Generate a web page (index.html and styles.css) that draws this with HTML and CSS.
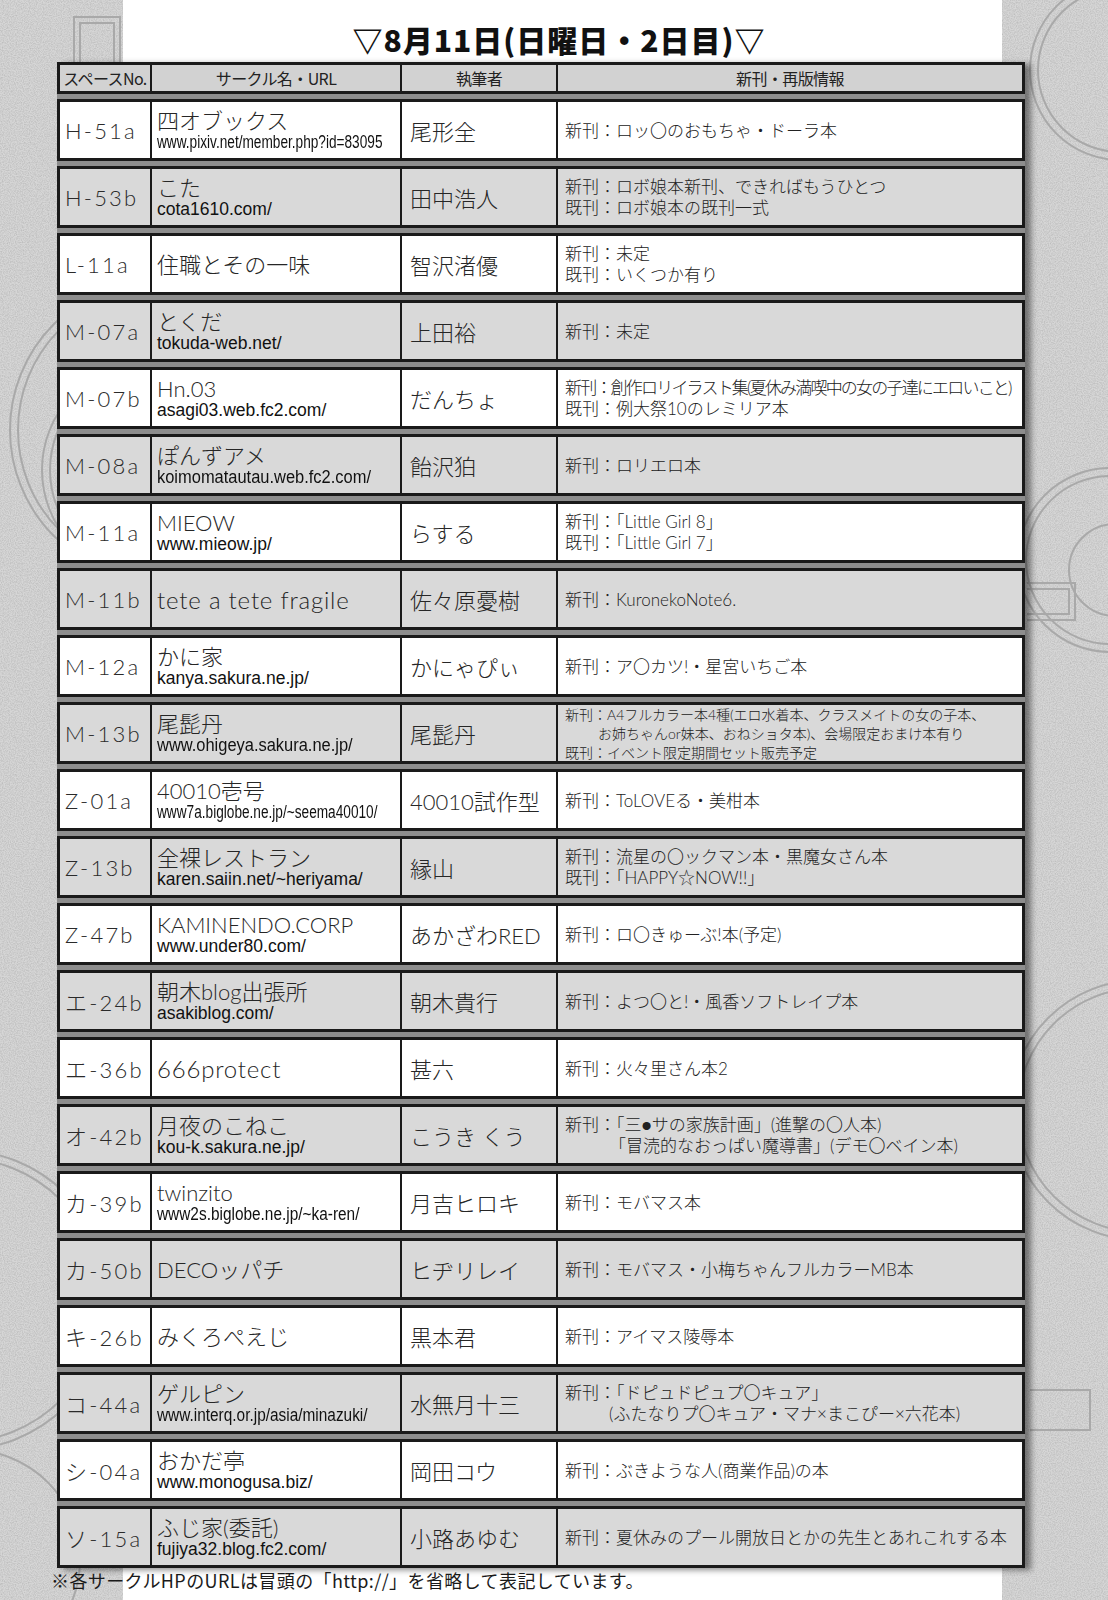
FILE: index.html
```html
<!DOCTYPE html>
<html lang="ja">
<head>
<meta charset="utf-8">
<title>8月11日(日曜日・2日目)</title>
<link rel="stylesheet" href="styles.css">
</head>
<body>
<svg class="bg" width="1108" height="1600" viewBox="0 0 1108 1600" aria-hidden="true">
  <defs>
    <filter id="grain" x="0" y="0" width="100%" height="100%">
      <feTurbulence type="fractalNoise" baseFrequency="0.85" numOctaves="2" seed="3"/>
      <feColorMatrix type="matrix" values="0 0 0 0 0.35  0 0 0 0 0.35  0 0 0 0 0.35  0 0 0 -1.6 1.05"/>
    </filter>
  </defs>
  <rect x="0" y="0" width="1108" height="1600" fill="#d6d6d6"/>
  <rect x="0" y="0" width="1108" height="1600" filter="url(#grain)" opacity="0.55"/>
  <g fill="none" stroke="#a9a9a9" stroke-width="2">
    <rect x="74" y="17" width="46" height="60"/>
    <rect x="80" y="23" width="34" height="54"/>
    <circle cx="160" cy="430" r="150"/>
    <circle cx="160" cy="430" r="142"/>
    <circle cx="150" cy="470" r="108"/>
    <circle cx="150" cy="470" r="100"/>
    <circle cx="1110" cy="560" r="92"/>
    <circle cx="1110" cy="560" r="84"/>
    <circle cx="1115" cy="570" r="46"/>
    <path d="M1027 583 H1075 V620 H1027"/>
    <path d="M1027 589 H1069 V614 H1027"/>
    <circle cx="1140" cy="1110" r="130"/>
    <circle cx="1140" cy="1110" r="122"/>
    <circle cx="-40" cy="1300" r="150"/>
    <circle cx="-40" cy="1300" r="142"/>
    <circle cx="1120" cy="70" r="90"/>
    <circle cx="1120" cy="70" r="82"/>
    <circle cx="-30" cy="1560" r="110"/>
    <path d="M1030 1390 H1090 V1430 H1030"/>
  </g>
  <rect x="123" y="0" width="879" height="1600" fill="#ffffff"/>
</svg>

<div class="page">
  <h1 class="title">▽8月11日(日曜日・2日目)▽</h1>

  <div class="table">
    <div class="row head">
      <div class="c hc">スペースNo.</div>
      <div class="c hc">サークル名・URL</div>
      <div class="c hc">執筆者</div>
      <div class="c hc">新刊・再版情報</div>
    </div>

    <div class="row">
      <div class="c sp">H-51a</div>
      <div class="c nm"><div class="name">四オブックス</div><div class="url n78">www.pixiv.net/member.php?id=83095</div></div>
      <div class="c au">尾形全</div>
      <div class="c info"><p>新刊：ロッ〇のおもちゃ・ドーラ本</p></div>
    </div>

    <div class="row g">
      <div class="c sp">H-53b</div>
      <div class="c nm"><div class="name">こた</div><div class="url">cota1610.com/</div></div>
      <div class="c au">田中浩人</div>
      <div class="c info"><p>新刊：ロボ娘本新刊、できればもうひとつ</p><p>既刊：ロボ娘本の既刊一式</p></div>
    </div>

    <div class="row">
      <div class="c sp">L-11a</div>
      <div class="c nm"><div class="name">住職とその一味</div></div>
      <div class="c au">智沢渚優</div>
      <div class="c info"><p>新刊：未定</p><p>既刊：いくつか有り</p></div>
    </div>

    <div class="row g">
      <div class="c sp">M-07a</div>
      <div class="c nm"><div class="name">とくだ</div><div class="url">tokuda-web.net/</div></div>
      <div class="c au">上田裕</div>
      <div class="c info"><p>新刊：未定</p></div>
    </div>

    <div class="row">
      <div class="c sp">M-07b</div>
      <div class="c nm"><div class="name">Hn.03</div><div class="url">asagi03.web.fc2.com/</div></div>
      <div class="c au">だんちょ</div>
      <div class="c info"><p class="tight">新刊：創作ロリイラスト集(夏休み満喫中の女の子達にエロいこと)</p><p>既刊：例大祭10のレミリア本</p></div>
    </div>

    <div class="row g">
      <div class="c sp">M-08a</div>
      <div class="c nm"><div class="name">ぽんずアメ</div><div class="url n94">koimomatautau.web.fc2.com/</div></div>
      <div class="c au">飴沢狛</div>
      <div class="c info"><p>新刊：ロリエロ本</p></div>
    </div>

    <div class="row">
      <div class="c sp">M-11a</div>
      <div class="c nm"><div class="name">MIEOW</div><div class="url">www.mieow.jp/</div></div>
      <div class="c au">らする</div>
      <div class="c info"><p>新刊：「Little Girl 8」</p><p>既刊：「Little Girl 7」</p></div>
    </div>

    <div class="row g">
      <div class="c sp">M-11b</div>
      <div class="c nm"><div class="name latin">tete a tete fragile</div></div>
      <div class="c au">佐々原憂樹</div>
      <div class="c info"><p>新刊：KuronekoNote6.</p></div>
    </div>

    <div class="row">
      <div class="c sp">M-12a</div>
      <div class="c nm"><div class="name">かに家</div><div class="url">kanya.sakura.ne.jp/</div></div>
      <div class="c au">かにゃぴぃ</div>
      <div class="c info"><p>新刊：ア〇カツ!・星宮いちご本</p></div>
    </div>

    <div class="row g">
      <div class="c sp">M-13b</div>
      <div class="c nm"><div class="name">尾髭丹</div><div class="url n94">www.ohigeya.sakura.ne.jp/</div></div>
      <div class="c au">尾髭丹</div>
      <div class="c info small"><p>新刊：A4フルカラー本4種(エロ水着本、クラスメイトの女の子本、</p><p class="indent-s">お姉ちゃんor妹本、おねショタ本)、会場限定おまけ本有り</p><p>既刊：イベント限定期間セット販売予定</p></div>
    </div>

    <div class="row">
      <div class="c sp">Z-01a</div>
      <div class="c nm"><div class="name">40010壱号</div><div class="url n78">www7a.biglobe.ne.jp/~seema40010/</div></div>
      <div class="c au">40010試作型</div>
      <div class="c info"><p>新刊：ToLOVEる・美柑本</p></div>
    </div>

    <div class="row g">
      <div class="c sp">Z-13b</div>
      <div class="c nm"><div class="name">全裸レストラン</div><div class="url">karen.saiin.net/~heriyama/</div></div>
      <div class="c au">縁山</div>
      <div class="c info"><p>新刊：流星の〇ックマン本・黒魔女さん本</p><p>既刊：「HAPPY☆NOW!!」</p></div>
    </div>

    <div class="row">
      <div class="c sp">Z-47b</div>
      <div class="c nm"><div class="name">KAMINENDO.CORP</div><div class="url">www.under80.com/</div></div>
      <div class="c au">あかざわRED</div>
      <div class="c info"><p>新刊：ロ〇きゅーぶ!本(予定)</p></div>
    </div>

    <div class="row g">
      <div class="c sp">エ-24b</div>
      <div class="c nm"><div class="name">朝木blog出張所</div><div class="url">asakiblog.com/</div></div>
      <div class="c au">朝木貴行</div>
      <div class="c info"><p>新刊：よつ〇と!・風香ソフトレイプ本</p></div>
    </div>

    <div class="row">
      <div class="c sp">エ-36b</div>
      <div class="c nm"><div class="name latin">666protect</div></div>
      <div class="c au">甚六</div>
      <div class="c info"><p>新刊：火々里さん本2</p></div>
    </div>

    <div class="row g">
      <div class="c sp">オ-42b</div>
      <div class="c nm"><div class="name">月夜のこねこ</div><div class="url">kou-k.sakura.ne.jp/</div></div>
      <div class="c au">こうき くう</div>
      <div class="c info"><p>新刊：「三●サの家族計画」(進撃の〇人本)</p><p class="indent">「冒涜的なおっぱい魔導書」(デモ〇ベイン本)</p></div>
    </div>

    <div class="row">
      <div class="c sp">カ-39b</div>
      <div class="c nm"><div class="name">twinzito</div><div class="url n88">www2s.biglobe.ne.jp/~ka-ren/</div></div>
      <div class="c au">月吉ヒロキ</div>
      <div class="c info"><p>新刊：モバマス本</p></div>
    </div>

    <div class="row g">
      <div class="c sp">カ-50b</div>
      <div class="c nm"><div class="name">DECOッパチ</div></div>
      <div class="c au">ヒヂリレイ</div>
      <div class="c info"><p>新刊：モバマス・小梅ちゃんフルカラーMB本</p></div>
    </div>

    <div class="row">
      <div class="c sp">キ-26b</div>
      <div class="c nm"><div class="name">みくろぺえじ</div></div>
      <div class="c au">黒本君</div>
      <div class="c info"><p>新刊：アイマス陵辱本</p></div>
    </div>

    <div class="row g">
      <div class="c sp">コ-44a</div>
      <div class="c nm"><div class="name">ゲルピン</div><div class="url n88">www.interq.or.jp/asia/minazuki/</div></div>
      <div class="c au">水無月十三</div>
      <div class="c info"><p>新刊：「ドピュドピュプ〇キュア」</p><p class="indent">(ふたなりプ〇キュア・マナ×まこぴー×六花本)</p></div>
    </div>

    <div class="row">
      <div class="c sp">シ-04a</div>
      <div class="c nm"><div class="name">おかだ亭</div><div class="url">www.monogusa.biz/</div></div>
      <div class="c au">岡田コウ</div>
      <div class="c info"><p>新刊：ぶきような人(商業作品)の本</p></div>
    </div>

    <div class="row g">
      <div class="c sp">ソ-15a</div>
      <div class="c nm"><div class="name">ふじ家(委託)</div><div class="url">fujiya32.blog.fc2.com/</div></div>
      <div class="c au">小路あゆむ</div>
      <div class="c info"><p>新刊：夏休みのプール開放日とかの先生とあれこれする本</p></div>
    </div>
  </div>

  <p class="note">※各サークルHPのURLは冒頭の「http://」を省略して表記しています。</p>
</div>
</body>
</html>
```

FILE: styles.css
```css
html, body {
  margin: 0;
  padding: 0;
}

body {
  width: 1108px;
  height: 1600px;
  position: relative;
  overflow: hidden;
  background: #d6d6d6;
  color: #1e1e1e;
  font-family: "Noto Sans CJK JP", sans-serif;
}

.bg {
  position: absolute;
  left: 0;
  top: 0;
  z-index: 0;
}

.page {
  position: relative;
  z-index: 1;
  padding-top: 22px;
}

.title {
  margin: 0 0 6px 0;
  padding-left: 10px;
  text-align: center;
  font-family: "Noto Sans CJK JP", sans-serif;
  font-weight: 900;
  font-size: 30px;
  line-height: 34px;
  letter-spacing: 1px;
  color: #111;
}

.table {
  margin-left: 57px;
  width: 968px;
  display: flex;
  flex-direction: column;
  gap: 5px;
  background: #8d8d8d;
  box-shadow: 6px 2px 6px rgba(0, 0, 0, 0.45);
}

.row {
  box-sizing: border-box;
  height: 62px;
  display: grid;
  grid-template-columns: 90px 250px 156px 1fr;
  border: 3px solid #1a1a1a;
  background: #ffffff;
}

.row.g {
  background: #d9d9d9;
}

.row.head {
  height: 32px;
  background: #d2d2d2;
}

.c {
  display: flex;
  flex-direction: column;
  justify-content: center;
  min-width: 0;
  overflow: hidden;
}

.c + .c {
  border-left: 2px solid #1a1a1a;
}

.hc {
  align-items: center;
  font-size: 16px;
  letter-spacing: -0.6px;
  color: #222;
  line-height: 20px;
}

.sp {
  padding-left: 5px;
  font-family: Lato, "Noto Sans CJK JP", sans-serif;
  font-weight: 300;
  font-size: 22px;
  letter-spacing: 2.2px;
  color: #2a2a2a;
  white-space: nowrap;
}

.nm {
  padding-left: 5px;
  white-space: nowrap;
}

.name {
  font-family: Lato, "Noto Sans CJK JP", sans-serif;
  font-weight: 300;
  font-size: 22px;
  line-height: 25px;
  color: #262626;
}

.name.latin {
  font-size: 24px;
  letter-spacing: 0.8px;
}

.url {
  font-family: "Liberation Sans", Arial, sans-serif;
  font-size: 17.5px;
  line-height: 19px;
  color: #111;
  transform-origin: left center;
  white-space: nowrap;
}

.url.n94 {
  transform: scaleX(0.94);
}

.url.n88 {
  transform: scaleX(0.88);
}

.url.n78 {
  transform: scaleX(0.78);
}

.au {
  padding-left: 8px;
  font-family: Lato, "Noto Sans CJK JP", sans-serif;
  font-weight: 300;
  font-size: 22px;
  color: #262626;
  white-space: nowrap;
}

.info {
  padding-left: 7px;
  font-family: Lato, "Noto Sans CJK JP", sans-serif;
  font-weight: 300;
  font-size: 17px;
  line-height: 21px;
  color: #222;
  white-space: nowrap;
}

.info p {
  margin: 0;
}

.info .tight {
  letter-spacing: -1.8px;
}

.info .indent {
  padding-left: 44px;
}

.info.small {
  font-size: 14px;
  line-height: 19px;
}

.info .indent-s {
  padding-left: 33px;
}

.note {
  margin: 1px 0 0 51px;
  font-size: 18px;
  line-height: 22px;
  letter-spacing: 0.4px;
  color: #1a1a1a;
}
```
